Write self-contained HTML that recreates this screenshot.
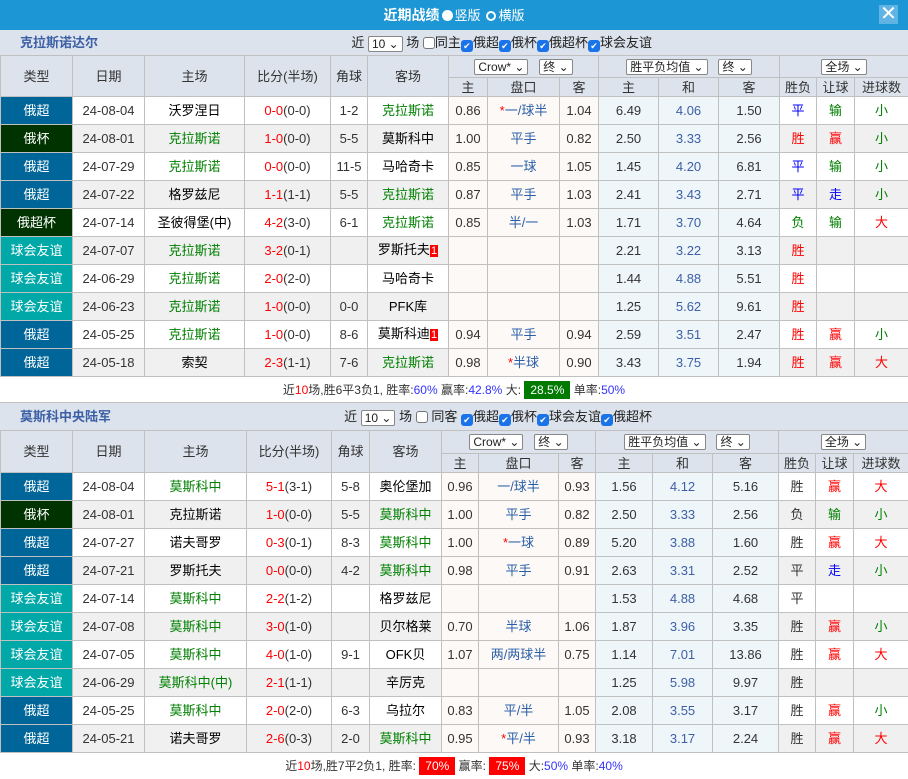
<!DOCTYPE html>
<html><head><meta charset="utf-8"><style>
*{margin:0;padding:0;box-sizing:border-box}
body{width:908px;height:767px;overflow:hidden;background:#fff;font-family:"Liberation Sans","Noto Sans CJK SC",sans-serif;font-size:13px;color:#333}
.top{height:30px;background:#1c96d4;color:#fff;font-weight:bold;font-size:14px;position:relative;text-align:center;line-height:30px}
.top .r{display:inline-block;width:11px;height:11px;border-radius:50%;vertical-align:-1px;margin:0 2px}
.top .x{position:absolute;right:10px;top:5px;width:19px;height:19px;background:#5fb4e4;color:#fff;font-size:20px;line-height:18px;text-align:center;font-weight:normal}
.bar{height:25px;background:#dce3ec;position:relative;line-height:25px}
.bar .t{position:absolute;left:20px;color:#3c5fa6;font-weight:bold;font-size:13px}
.bar .f{position:absolute;right:256px;font-size:13px;color:#222}
.sel{display:inline-block;border:1px solid #888;background:#fff;height:16px;line-height:14px;padding:0 3px;font-size:12px;vertical-align:middle;border-radius:2px;color:#222}
.cb{display:inline-block;width:12px;height:12px;border-radius:3px;background:#1a73e8;color:#fff;font-size:9px;line-height:12px;text-align:center;vertical-align:-2px}
.cb0{display:inline-block;width:12px;height:12px;border-radius:3px;border:1px solid #777;background:#fff;vertical-align:-2px}
table{border-collapse:collapse;table-layout:fixed;width:908px}
td{border:1px solid #c0c0c0;text-align:center;height:28px;padding:0;line-height:15px;white-space:nowrap;overflow:hidden}
tr.h td{background:#dce3ec;color:#333}
tr.h1 td{height:22px}
tr.h2 td{height:19px}
.t2 tr.h1 td{height:23px}
tr.e td{background:#f0f0f0}
td.ty{color:#fff}
.cs{background:#006699!important}.cb1{background:#003300!important}.fr{background:#00a8a8!important}
td.o{background:#fdf9f6!important}
td.a{background:#eef6fa!important}
.g{color:#008000}.rd{color:#f00}.bl{color:#0000ff}.hb{color:#2a5fa8}.hz{color:#3c5fa6}.k{color:#000}
.sum{height:26px;text-align:center;line-height:26px;font-size:12px;border-bottom:1px solid #c0c0c0}
.sum .b{color:#3333ff}
.flag{background:#f00;color:#fff;font-size:11px;padding:0 1px}
</style></head><body>
<div class="top">近期战绩<span class="r" style="background:#fff"></span><span style="font-weight:normal;font-size:13px">竖版</span> <span class="r" style="border:2px solid #fff;width:10px;height:10px"></span><span style="font-weight:normal;font-size:13px">横版</span><div class="x">✕</div></div>
<div class="bar"><span class="t">克拉斯诺达尔</span><span class="f">近 <span class="sel">10 ⌄</span> 场 <span class="cb0"></span>同主<span class="cb">✔</span>俄超<span class="cb">✔</span>俄杯<span class="cb">✔</span>俄超杯<span class="cb">✔</span>球会友谊</span></div>
<table>
<colgroup><col style="width:72px"><col style="width:72px"><col style="width:100px"><col style="width:86px"><col style="width:37px"><col style="width:81px"><col style="width:39px"><col style="width:72px"><col style="width:39px"><col style="width:60px"><col style="width:60px"><col style="width:61px"><col style="width:37px"><col style="width:38px"><col style="width:54px"></colgroup>
<tr class="h h1"><td rowspan="2">类型</td><td rowspan="2">日期</td><td rowspan="2">主场</td><td rowspan="2">比分(半场)</td><td rowspan="2">角球</td><td rowspan="2">客场</td><td colspan="3"><span class="sel">Crow* ⌄</span> &nbsp; <span class="sel">终 ⌄</span></td><td colspan="3"><span class="sel">胜平负均值 ⌄</span> &nbsp; <span class="sel">终 ⌄</span></td><td colspan="3"><span class="sel">全场 ⌄</span></td></tr>
<tr class="h h2"><td>主</td><td>盘口</td><td>客</td><td>主</td><td>和</td><td>客</td><td>胜负</td><td>让球</td><td>进球数</td></tr>
<tr><td class="ty cs">俄超</td><td>24-08-04</td><td class="k">沃罗涅日</td><td><span class="rd">0-0</span>(0-0)</td><td>1-2</td><td class="g">克拉斯诺</td><td class="o">0.86</td><td class="o hb"><span class="rd">*</span>一/球半</td><td class="o">1.04</td><td class="a">6.49</td><td class="a hz">4.06</td><td class="a">1.50</td><td class="bl">平</td><td class="g">输</td><td class="g">小</td></tr>
<tr class="e"><td class="ty cb1">俄杯</td><td>24-08-01</td><td class="g">克拉斯诺</td><td><span class="rd">1-0</span>(0-0)</td><td>5-5</td><td class="k">莫斯科中</td><td class="o">1.00</td><td class="o hb">平手</td><td class="o">0.82</td><td class="a">2.50</td><td class="a hz">3.33</td><td class="a">2.56</td><td class="rd">胜</td><td class="rd">赢</td><td class="g">小</td></tr>
<tr><td class="ty cs">俄超</td><td>24-07-29</td><td class="g">克拉斯诺</td><td><span class="rd">0-0</span>(0-0)</td><td>11-5</td><td class="k">马哈奇卡</td><td class="o">0.85</td><td class="o hb">一球</td><td class="o">1.05</td><td class="a">1.45</td><td class="a hz">4.20</td><td class="a">6.81</td><td class="bl">平</td><td class="g">输</td><td class="g">小</td></tr>
<tr class="e"><td class="ty cs">俄超</td><td>24-07-22</td><td class="k">格罗兹尼</td><td><span class="rd">1-1</span>(1-1)</td><td>5-5</td><td class="g">克拉斯诺</td><td class="o">0.87</td><td class="o hb">平手</td><td class="o">1.03</td><td class="a">2.41</td><td class="a hz">3.43</td><td class="a">2.71</td><td class="bl">平</td><td class="bl">走</td><td class="g">小</td></tr>
<tr><td class="ty cb1">俄超杯</td><td>24-07-14</td><td class="k">圣彼得堡(中)</td><td><span class="rd">4-2</span>(3-0)</td><td>6-1</td><td class="g">克拉斯诺</td><td class="o">0.85</td><td class="o hb">半/一</td><td class="o">1.03</td><td class="a">1.71</td><td class="a hz">3.70</td><td class="a">4.64</td><td class="g">负</td><td class="g">输</td><td class="rd">大</td></tr>
<tr class="e"><td class="ty fr">球会友谊</td><td>24-07-07</td><td class="g">克拉斯诺</td><td><span class="rd">3-2</span>(0-1)</td><td></td><td class="k">罗斯托夫<span class="flag">1</span></td><td class="o"></td><td class="o"></td><td class="o"></td><td class="a">2.21</td><td class="a hz">3.22</td><td class="a">3.13</td><td class="rd">胜</td><td></td><td></td></tr>
<tr><td class="ty fr">球会友谊</td><td>24-06-29</td><td class="g">克拉斯诺</td><td><span class="rd">2-0</span>(2-0)</td><td></td><td class="k">马哈奇卡</td><td class="o"></td><td class="o"></td><td class="o"></td><td class="a">1.44</td><td class="a hz">4.88</td><td class="a">5.51</td><td class="rd">胜</td><td></td><td></td></tr>
<tr class="e"><td class="ty fr">球会友谊</td><td>24-06-23</td><td class="g">克拉斯诺</td><td><span class="rd">1-0</span>(0-0)</td><td>0-0</td><td class="k">PFK库</td><td class="o"></td><td class="o"></td><td class="o"></td><td class="a">1.25</td><td class="a hz">5.62</td><td class="a">9.61</td><td class="rd">胜</td><td></td><td></td></tr>
<tr><td class="ty cs">俄超</td><td>24-05-25</td><td class="g">克拉斯诺</td><td><span class="rd">1-0</span>(0-0)</td><td>8-6</td><td class="k">莫斯科迪<span class="flag">1</span></td><td class="o">0.94</td><td class="o hb">平手</td><td class="o">0.94</td><td class="a">2.59</td><td class="a hz">3.51</td><td class="a">2.47</td><td class="rd">胜</td><td class="rd">赢</td><td class="g">小</td></tr>
<tr class="e"><td class="ty cs">俄超</td><td>24-05-18</td><td class="k">索契</td><td><span class="rd">2-3</span>(1-1)</td><td>7-6</td><td class="g">克拉斯诺</td><td class="o">0.98</td><td class="o hb"><span class="rd">*</span>半球</td><td class="o">0.90</td><td class="a">3.43</td><td class="a hz">3.75</td><td class="a">1.94</td><td class="rd">胜</td><td class="rd">赢</td><td class="rd">大</td></tr>
</table>
<div class="sum">近<span class="rd">10</span>场,胜6平3负1, 胜率:<span class="b">60%</span> 赢率:<span class="b">42.8%</span> 大: <span style="background:#007a00;color:#fff;padding:2px 6px">28.5%</span> 单率:<span class="b">50%</span></div>
<div class="bar" style="height:27px;line-height:27px"><span class="t">莫斯科中央陆军</span><span class="f" style="right:256px">近 <span class="sel">10 ⌄</span> 场 <span class="cb0"></span> 同客 <span class="cb">✔</span>俄超<span class="cb">✔</span>俄杯<span class="cb">✔</span>球会友谊<span class="cb">✔</span>俄超杯</span></div>
<table class="t2">
<colgroup><col style="width:72px"><col style="width:72px"><col style="width:102px"><col style="width:85px"><col style="width:38px"><col style="width:72px"><col style="width:37px"><col style="width:80px"><col style="width:37px"><col style="width:57px"><col style="width:60px"><col style="width:66px"><col style="width:37px"><col style="width:38px"><col style="width:55px"></colgroup>
<tr class="h h1"><td rowspan="2">类型</td><td rowspan="2">日期</td><td rowspan="2">主场</td><td rowspan="2">比分(半场)</td><td rowspan="2">角球</td><td rowspan="2">客场</td><td colspan="3"><span class="sel">Crow* ⌄</span> &nbsp; <span class="sel">终 ⌄</span></td><td colspan="3"><span class="sel">胜平负均值 ⌄</span> &nbsp; <span class="sel">终 ⌄</span></td><td colspan="3"><span class="sel">全场 ⌄</span></td></tr>
<tr class="h h2"><td>主</td><td>盘口</td><td>客</td><td>主</td><td>和</td><td>客</td><td>胜负</td><td>让球</td><td>进球数</td></tr>
<tr><td class="ty cs">俄超</td><td>24-08-04</td><td class="g">莫斯科中</td><td><span class="rd">5-1</span>(3-1)</td><td>5-8</td><td class="k">奥伦堡加</td><td class="o">0.96</td><td class="o hb">一/球半</td><td class="o">0.93</td><td class="a">1.56</td><td class="a hz">4.12</td><td class="a">5.16</td><td>胜</td><td class="rd">赢</td><td class="rd">大</td></tr>
<tr class="e"><td class="ty cb1">俄杯</td><td>24-08-01</td><td class="k">克拉斯诺</td><td><span class="rd">1-0</span>(0-0)</td><td>5-5</td><td class="g">莫斯科中</td><td class="o">1.00</td><td class="o hb">平手</td><td class="o">0.82</td><td class="a">2.50</td><td class="a hz">3.33</td><td class="a">2.56</td><td>负</td><td class="g">输</td><td class="g">小</td></tr>
<tr><td class="ty cs">俄超</td><td>24-07-27</td><td class="k">诺夫哥罗</td><td><span class="rd">0-3</span>(0-1)</td><td>8-3</td><td class="g">莫斯科中</td><td class="o">1.00</td><td class="o hb"><span class="rd">*</span>一球</td><td class="o">0.89</td><td class="a">5.20</td><td class="a hz">3.88</td><td class="a">1.60</td><td>胜</td><td class="rd">赢</td><td class="rd">大</td></tr>
<tr class="e"><td class="ty cs">俄超</td><td>24-07-21</td><td class="k">罗斯托夫</td><td><span class="rd">0-0</span>(0-0)</td><td>4-2</td><td class="g">莫斯科中</td><td class="o">0.98</td><td class="o hb">平手</td><td class="o">0.91</td><td class="a">2.63</td><td class="a hz">3.31</td><td class="a">2.52</td><td>平</td><td class="bl">走</td><td class="g">小</td></tr>
<tr><td class="ty fr">球会友谊</td><td>24-07-14</td><td class="g">莫斯科中</td><td><span class="rd">2-2</span>(1-2)</td><td></td><td class="k">格罗兹尼</td><td class="o"></td><td class="o"></td><td class="o"></td><td class="a">1.53</td><td class="a hz">4.88</td><td class="a">4.68</td><td>平</td><td></td><td></td></tr>
<tr class="e"><td class="ty fr">球会友谊</td><td>24-07-08</td><td class="g">莫斯科中</td><td><span class="rd">3-0</span>(1-0)</td><td></td><td class="k">贝尔格莱</td><td class="o">0.70</td><td class="o hb">半球</td><td class="o">1.06</td><td class="a">1.87</td><td class="a hz">3.96</td><td class="a">3.35</td><td>胜</td><td class="rd">赢</td><td class="g">小</td></tr>
<tr><td class="ty fr">球会友谊</td><td>24-07-05</td><td class="g">莫斯科中</td><td><span class="rd">4-0</span>(1-0)</td><td>9-1</td><td class="k">OFK贝</td><td class="o">1.07</td><td class="o hb">两/两球半</td><td class="o">0.75</td><td class="a">1.14</td><td class="a hz">7.01</td><td class="a">13.86</td><td>胜</td><td class="rd">赢</td><td class="rd">大</td></tr>
<tr class="e"><td class="ty fr">球会友谊</td><td>24-06-29</td><td class="g">莫斯科中(中)</td><td><span class="rd">2-1</span>(1-1)</td><td></td><td class="k">辛厉克</td><td class="o"></td><td class="o"></td><td class="o"></td><td class="a">1.25</td><td class="a hz">5.98</td><td class="a">9.97</td><td>胜</td><td></td><td></td></tr>
<tr><td class="ty cs">俄超</td><td>24-05-25</td><td class="g">莫斯科中</td><td><span class="rd">2-0</span>(2-0)</td><td>6-3</td><td class="k">乌拉尔</td><td class="o">0.83</td><td class="o hb">平/半</td><td class="o">1.05</td><td class="a">2.08</td><td class="a hz">3.55</td><td class="a">3.17</td><td>胜</td><td class="rd">赢</td><td class="g">小</td></tr>
<tr class="e"><td class="ty cs">俄超</td><td>24-05-21</td><td class="k">诺夫哥罗</td><td><span class="rd">2-6</span>(0-3)</td><td>2-0</td><td class="g">莫斯科中</td><td class="o">0.95</td><td class="o hb"><span class="rd">*</span>平/半</td><td class="o">0.93</td><td class="a">3.18</td><td class="a hz">3.17</td><td class="a">2.24</td><td>胜</td><td class="rd">赢</td><td class="rd">大</td></tr>
</table>
<div class="sum" style="border:none">近<span class="rd">10</span>场,胜7平2负1, 胜率: <span style="background:#f00;color:#fff;padding:2px 6px">70%</span> 赢率: <span style="background:#f00;color:#fff;padding:2px 6px">75%</span> 大:<span class="b">50%</span> 单率:<span class="b">40%</span></div>
</body></html>
